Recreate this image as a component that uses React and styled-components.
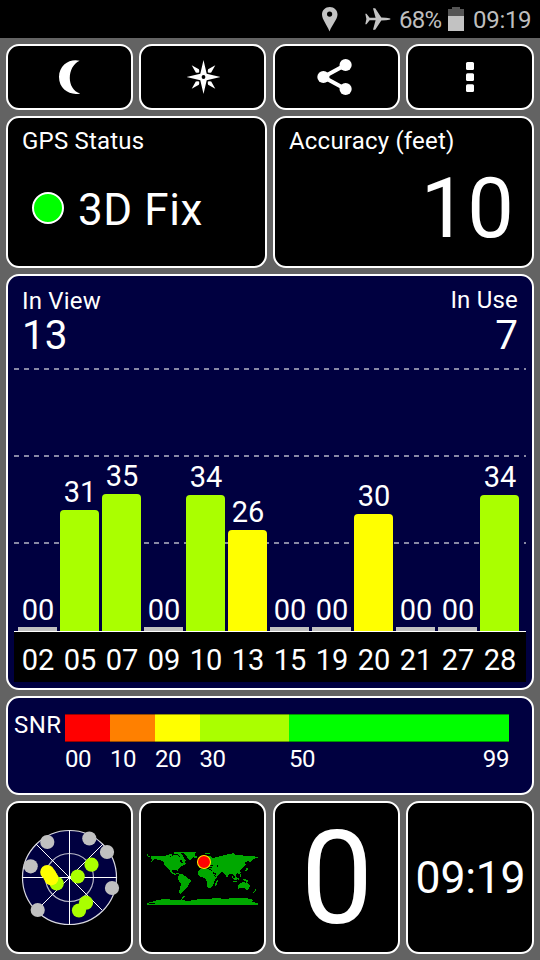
import React from "react";
import styled, { createGlobalStyle } from "styled-components";

const GREEN = "#00ff00";
const LIME = "#aaff00";
const YELLOW = "#ffff00";
const NAVY = "#000040";
const GREY = "#c0c0c0";

const GlobalStyle = createGlobalStyle`
  * { box-sizing: border-box; }
  body { margin: 0; background: #636363; }
`;

const Screen = styled.div`
  width: 540px;
  height: 960px;
  background: #636363;
  color: #fff;
  font-family: Roboto, sans-serif;
  overflow: hidden;
`;

const StatusBar = styled.header`
  height: 38px;
  background: #000;
  color: #bebebe;
  display: flex;
  align-items: center;
  justify-content: flex-end;
  padding-right: 8px;
  svg { display: block; flex: none; }
`;

const StatusText = styled.span`
  font-size: 24px;
  line-height: 38px;
  width: ${(p) => p.$width}px;
  margin: 1px 0 0 ${(p) => p.$gap}px;
  letter-spacing: ${(p) => p.$tracking || 0}px;
  white-space: nowrap;
`;

const StatusGap = styled.span`
  width: ${(p) => p.$w}px;
`;

const Panels = styled.main`
  display: grid;
  grid-template-rows: 66px 152px 416px 99px 153px;
  gap: 6px;
  padding: 6px;
`;

const Row = styled.div`
  display: grid;
  grid-template-columns: ${(p) => p.$cols};
  column-gap: ${(p) => p.$gap || 6}px;
`;

const Card = styled.section`
  border: 2px solid #fff;
  border-radius: 13px;
  background: ${(p) => (p.$navy ? NAVY : "#000")};
  min-width: 0;
  overflow: hidden;
`;

const CenterCard = styled(Card)`
  display: flex;
  align-items: center;
  justify-content: center;
  svg { display: block; flex: none; }
`;

const ReadoutCard = styled(Card)`
  padding: 9px 18px 0 14px;
`;

const Label = styled.div`
  font-size: 24px;
  line-height: 28px;
  letter-spacing: ${(p) => p.$tracking || 0.2}px;
  white-space: nowrap;
`;

const FixLine = styled.div`
  display: flex;
  align-items: center;
  margin: 29px 0 0 10px;
  height: 52px;
`;

const FixDot = styled.span`
  width: 32px;
  height: 32px;
  margin: 0 14px 4px 0;
  border-radius: 50%;
  border: 2px solid #fff;
  background: ${GREEN};
`;

const FixText = styled.span`
  font-size: 44px;
  line-height: 52px;
  letter-spacing: 0.6px;
`;

const BigReadout = styled.div`
  font-size: 83px;
  line-height: 84px;
  margin-top: 12px;
  text-align: right;
`;

const ChartCard = styled(Card)`
  padding: 11px 6px 6px;
  display: flex;
  flex-direction: column;
`;

const Counts = styled.div`
  display: flex;
  justify-content: space-between;
  padding: 0 8px;
  height: 69px;
`;

const Count = styled.div`
  text-align: ${(p) => p.$align};
  margin-top: ${(p) => p.$raise || 0}px;
`;

const CountValue = styled.div`
  font-size: 40.5px;
  line-height: 41px;
  margin-top: ${(p) => p.$drop || 0}px;
`;

const DASH = `repeating-linear-gradient(90deg, #8888a4 0 5px, transparent 5px 10px)`;

const Plot = styled.div`
  height: 276px;
  border-bottom: 1px solid #fff;
  padding-left: 4px;
  display: flex;
  align-items: flex-end;
  gap: 3px;
  background-image: ${DASH}, ${DASH}, ${DASH};
  background-size: 100% 2px;
  background-position: 0 12px, 0 99px, 0 186px;
  background-repeat: no-repeat;
`;

const BarColumn = styled.div`
  width: 39px;
  display: flex;
  flex-direction: column;
  align-items: center;
`;

const BarValue = styled.span`
  font-size: 29px;
  line-height: 34px;
  padding-left: 1px;
  margin-bottom: ${(p) => (p.$empty ? 0 : 1)}px;
`;

const Bar = styled.div`
  width: 39px;
  height: ${(p) => p.$height}px;
  background: ${(p) => p.$color};
  border-radius: ${(p) => (p.$height > 4 ? "4px 4px 0 0" : "0")};
`;

const PrnRow = styled.div`
  height: 50px;
  background: #000;
  padding-left: 4px;
  display: flex;
  gap: 3px;
`;

const Prn = styled.span`
  width: 39px;
  padding-left: 1px;
  font-size: 29px;
  line-height: 56px;
  text-align: center;
`;

const ScaleCard = styled(Card)`
  padding: 16px 23px 0 6px;
  display: flex;
`;

const ScaleTitle = styled.div`
  width: 51px;
  font-size: 24px;
  line-height: 22px;
  letter-spacing: 0.5px;
  white-space: nowrap;
`;

const ScaleBody = styled.div`
  display: grid;
  grid-template-columns: 45px 45px 44.5px 89.5px 220px;
  grid-template-rows: 28px 32px;
`;

const Swatch = styled.div`
  background: ${(p) => p.$color};
  border: 0 solid rgba(0, 0, 0, 0.4);
  border-top-width: 1px;
  border-bottom-width: 1px;
`;

const Tick = styled.div`
  font-size: 24px;
  line-height: 34px;
  letter-spacing: -0.4px;
  display: flex;
  justify-content: space-between;
`;

const Speed = styled.span`
  font-size: 129px;
  line-height: 132px;
  padding: 2px 0 0 1px;
`;

const Clock = styled.span`
  font-size: 44.5px;
  line-height: 52px;
  padding-left: 1px;
  letter-spacing: -0.2px;
  white-space: nowrap;
`;

const satellites = [
  ["02", "00", 4, GREY],
  ["05", "31", 121, LIME],
  ["07", "35", 137, LIME],
  ["09", "00", 4, GREY],
  ["10", "34", 136, LIME],
  ["13", "26", 101, YELLOW],
  ["15", "00", 4, GREY],
  ["19", "00", 4, GREY],
  ["20", "30", 117, YELLOW],
  ["21", "00", 4, GREY],
  ["27", "00", 4, GREY],
  ["28", "34", 136, LIME],
];

const skyDots = [
  [47.3, 42, GREY], [89.3, 38.5, GREY], [107, 52, GREY], [30.7, 66.3, GREY],
  [112, 88, GREY], [37.7, 110, GREY], [91.5, 64.7, LIME], [77.7, 76.5, LIME],
  [56.7, 83.5, LIME], [86, 102.7, LIME], [79, 110.5, LIME],
  [47.3, 72, YELLOW], [49.3, 74.8, YELLOW], [51.3, 78.3, YELLOW],
];

const PinIcon = () => (
  <svg width="16" height="25" viewBox="0 0 16 25">
    <path fill="#c4c4c4" fillRule="evenodd" d="M7.8 0C3.3 0 0 3.3 0 7.5C0 12.5 4.6 17 7.5 24.5C10.4 17 15.5 12.5 15.5 7.5C15.5 3.3 12.2 0 7.8 0ZM7.6 4.5a2.6 2.6 0 1 1 0 5.2a2.6 2.6 0 0 1 0-5.2Z" />
  </svg>
);

const PlaneIcon = () => (
  <svg width="26" height="22" viewBox="0 0 26 22">
    <path fill="#c4c4c4" d="M.3 5.8H1.5L4.6 9.7H10.6L8 .3H10.2L16.3 9.5L21 9.8C23.5 10 25.5 10.4 25.5 11S23.5 12 21 12.2L16.3 12.5L10.2 21.7H8L10.6 12.3H4.6L1.5 16.2H.3L1.4 11Z" />
  </svg>
);

const BatteryIcon = () => (
  <svg width="16" height="24" viewBox="0 0 16 24" shapeRendering="crispEdges">
    <path fill="#555" d="M4 0H12V2H16V9H0V2H4Z" />
    <path fill="#c2c2c2" d="M0 9H16V24H0Z" />
  </svg>
);

const MoonIcon = () => (
  <svg width="40" height="40" viewBox="0 0 40 40">
    <path fill="#fff" d="M29.6 3.8C20.5 1.4 9 7.5 9 20.1C9 32.6 20.5 39 30.2 36.4C16.5 32.8 16.5 9.8 29.6 3.8Z" />
  </svg>
);

const CompassIcon = () => (
  <svg width="40" height="40" viewBox="0 0 40 40">
    <g fill="#fff">
      <path d="M20.5 3L23.7 16.8L37.5 20L23.7 23.2L20.5 37L17.3 23.2L3.5 20L17.3 16.8Z" />
      {[45, 135, 225, 315].map((a) => (
        <path key={a} transform={`rotate(${a} 20.5 20)`} d="M20.5 3.3L22.7 11.3Q22.2 12.6 20.5 13.8Q18.8 12.6 18.3 11.3Z" />
      ))}
    </g>
    <circle cx="20.5" cy="20" r="1.9" fill="#000" />
  </svg>
);

const ShareIcon = () => (
  <svg width="40" height="40" viewBox="0 0 40 40">
    <path d="M28.4 8L6.4 20L28.4 32" fill="none" stroke="#fff" strokeWidth="4" />
    <circle cx="6.4" cy="20" r="6.1" fill="#fff" />
    <circle cx="28.6" cy="8" r="6.1" fill="#fff" />
    <circle cx="28.6" cy="32" r="6.1" fill="#fff" />
  </svg>
);

const MoreIcon = () => (
  <svg width="40" height="40" viewBox="0 0 40 40" fill="#fff">
    <rect x="16" y="5" width="8" height="8" rx="1.5" />
    <rect x="16" y="16.2" width="8" height="7.8" rx="1.5" />
    <rect x="16" y="27.3" width="8" height="7.8" rx="1.5" />
  </svg>
);

const SkyView = () => (
  <svg width="123" height="149" viewBox="8 3 123 149">
    <circle cx="69.5" cy="77.5" r="47" fill={NAVY} stroke="#d8d8e0" strokeWidth="1.2" />
    <circle cx="69.5" cy="77.5" r="24" fill="none" stroke="#b8b8c8" strokeWidth="1.2" />
    <path d="M69.5 30.5V124.5M22.5 77.5H116.5" stroke="#fff" strokeWidth="1" />
    <path d="M36.5 44.5L102.5 110.5M36.5 110.5L102.5 44.5" stroke="#fff" strokeWidth="1" shapeRendering="crispEdges" />
    {skyDots.map(([x, y, c], i) => (
      <circle key={i} cx={x} cy={y} r="7.1" fill={c} />
    ))}
  </svg>
);

const landMasses = [
  // Alaska and North America
  "M18 24H60L66 27H78L81 24L90 21H99L102 27L108 24L111 30L117 33L123 36L120 45L123 48L117 51L111 54L105 60L99 66L96 72L93 66H84L81 69L84 75H90L93 81L99 84L93 82L84 78L78 75L75 69L69 60L60 54L57 45L54 39L42 36L30 33L24 39L18 42L24 36L18 33Z",
  // Arctic islands
  "M60 24L69 21L75 18L84 21L78 24L72 27L60 27ZM87 12H120V15H105L111 21L117 24L111 27L102 24L96 18H87ZM105 27L111 24L120 30L117 33L108 33Z",
  // Greenland
  "M111 12H153L150 18V24L144 30L135 36L129 33L126 24L117 18Z",
  "M93 75H102V78H93ZM105 78H114V81H105ZM6 18H9V24H15V27H9L6 24Z",
  // South America
  "M102 78L111 78L120 84L126 90L138 96L138 102L132 108L129 117L120 123L114 132L108 138H105L102 132L105 120L108 108L102 99L99 90Z",
  // Iceland and Nordic islands
  "M147 24H156V30H147ZM180 15H195V18H180Z",
  // Europe and Asia
  "M162 51L168 45L174 36L186 24L195 24L204 30L216 27L228 24L240 21L252 18H258L264 15L270 21L288 21L300 24L318 24L339 27V30L324 33L321 39L315 45L312 39L300 42L303 51L294 60L285 66L288 75L282 78L276 75L273 84L279 93L276 96L270 87L264 78L252 78L246 90L243 84L237 75L228 72L222 81L213 87L207 78L201 69L195 63L186 60L180 63L171 60L162 60Z",
  "M165 33L171 33V42L165 42Z",
  // Africa
  "M162 66L171 63L186 63L198 66L204 75L210 87H216L210 96L207 105L204 114L195 120H189L186 114V102L180 90L168 87L159 81V72Z",
  "M213 99L219 96L216 111L210 114Z",
  // Japan and the Indonesian islands
  "M306 60H309V66L303 69L300 72L303 63ZM285 78H288V87H285ZM261 84H264V90L270 96L264 93ZM267 90L276 87V96L270 96ZM279 90H282V96H279ZM264 99H276V102H264ZM291 93L300 93L312 99L306 102L297 99Z",
  // Australia and New Zealand
  "M279 111L288 105L297 102L303 105L306 102L315 114L312 123L306 126L297 120L285 120L279 123ZM327 123H333V126L330 132L324 135L330 126Z",
  // Antarctica
  "M6 165L30 159L36 156L63 153L84 156H108L111 150L117 144L120 147L111 156L129 159L150 156L165 153H195L210 150L243 153L264 150H300L315 153L324 156L321 162L339 165V171H6Z",
];

const WorldMap = () => (
  <svg width="123" height="149" viewBox="141 803 123 149">
    <g transform="translate(145 848) scale(.33333)" fill="#00a800" shapeRendering="crispEdges">
      {landMasses.map((d, i) => (
        <path key={i} d={d} />
      ))}
      <path fill="#000" d="M105 36H111V39L114 45H108L102 39H105ZM183 57H201V60H189ZM195 51H204V54H195ZM216 51H219V57H216ZM189 33H192V39H189ZM204 72L216 78L213 81L207 78ZM84 66H96V69H87ZM12 165H30V168H12Z" />
    </g>
    <circle cx="204" cy="862" r="6.5" fill="#f00" stroke="#ffe600" strokeWidth="1.1" />
  </svg>
);

export default function App() {
  return (
    <Screen>
      <GlobalStyle />
      <StatusBar>
        <PinIcon />
        <StatusGap $w={27} />
        <PlaneIcon />
        <StatusText $gap={8} $width={45} $tracking={-0.7}>68%</StatusText>
        <StatusGap $w={4} />
        <BatteryIcon />
        <StatusText $gap={9} $width={59} $tracking={-0.3}>09:19</StatusText>
      </StatusBar>
      <Panels>
        <Row $cols="261px 261px">
          <Row $cols="127px 127px">
            <CenterCard><MoonIcon /></CenterCard>
            <CenterCard><CompassIcon /></CenterCard>
          </Row>
          <Row $cols="127px 128px">
            <CenterCard><ShareIcon /></CenterCard>
            <CenterCard><MoreIcon /></CenterCard>
          </Row>
        </Row>
        <Row $cols="261px 261px">
          <ReadoutCard>
            <Label>GPS Status</Label>
            <FixLine>
              <FixDot />
              <FixText>3D Fix</FixText>
            </FixLine>
          </ReadoutCard>
          <ReadoutCard>
            <Label>Accuracy (feet)</Label>
            <BigReadout>10</BigReadout>
          </ReadoutCard>
        </Row>
        <ChartCard $navy>
          <Counts>
            <Count $align="left">
              <Label>In View</Label>
              <CountValue>13</CountValue>
            </Count>
            <Count $align="right" $raise={-1}>
              <Label>In Use</Label>
              <CountValue $drop={1}>7</CountValue>
            </Count>
          </Counts>
          <Plot>
            {satellites.map(([prn, snr, height, color]) => (
              <BarColumn key={prn}>
                <BarValue $empty={height === 4}>{snr}</BarValue>
                <Bar $height={height} $color={color} />
              </BarColumn>
            ))}
          </Plot>
          <PrnRow>
            {satellites.map(([prn]) => (
              <Prn key={prn}>{prn}</Prn>
            ))}
          </PrnRow>
        </ChartCard>
        <ScaleCard $navy>
          <ScaleTitle>SNR</ScaleTitle>
          <ScaleBody>
            <Swatch $color="#ff0000" />
            <Swatch $color="#ff8000" />
            <Swatch $color={YELLOW} />
            <Swatch $color={LIME} />
            <Swatch $color={GREEN} />
            <Tick>00</Tick>
            <Tick>10</Tick>
            <Tick>20</Tick>
            <Tick>30</Tick>
            <Tick><span>50</span><span>99</span></Tick>
          </ScaleBody>
        </ScaleCard>
        <Row $cols="261px 261px">
          <Row $cols="127px 127px">
            <CenterCard><SkyView /></CenterCard>
            <CenterCard><WorldMap /></CenterCard>
          </Row>
          <Row $cols="127px 128px">
            <CenterCard><Speed>0</Speed></CenterCard>
            <CenterCard><Clock>09:19</Clock></CenterCard>
          </Row>
        </Row>
      </Panels>
    </Screen>
  );
}
